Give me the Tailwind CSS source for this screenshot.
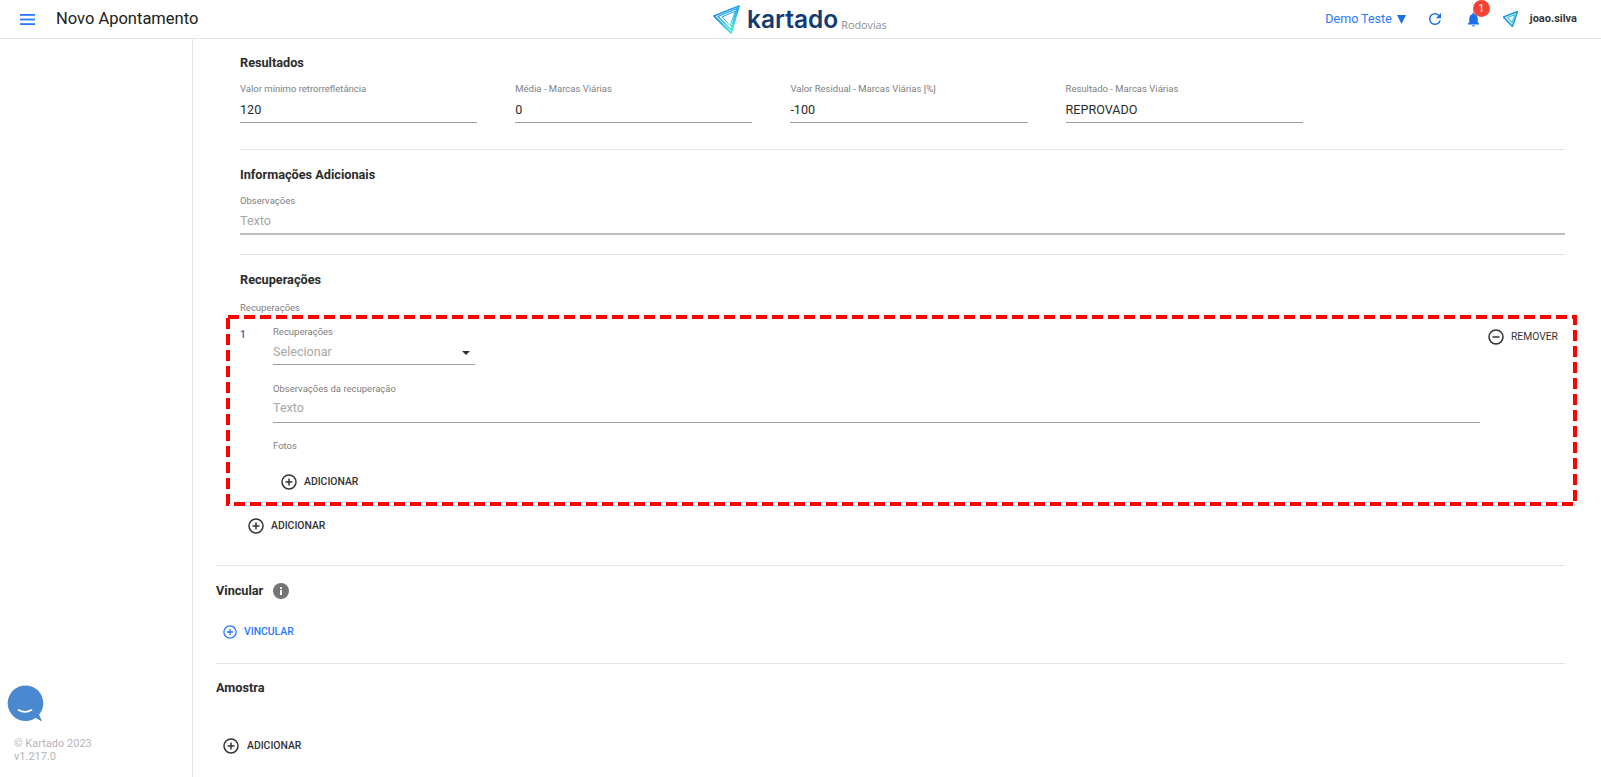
<!DOCTYPE html>
<html lang="pt-BR">
  <head>
    <meta charset="UTF-8" />
    <title>Novo Apontamento</title>
    <script src="https://cdn.jsdelivr.net/npm/@tailwindcss/browser@4"></script>
  </head>
  <body class="antialiased bg-white h-[777px] overflow-hidden font-['Roboto',sans-serif] text-[#2b2b2b]">
    <header class="relative flex items-center justify-between h-[39px] border-b border-[#e4e4e4] pl-[20px] pr-[24px]">
      <div class="flex items-center">
        <svg class="w-[15px] h-[11px]" viewBox="0 0 15 11" fill="#2979ff">
          <rect y="0" width="15" height="1.800" />
          <rect y="4.600" width="15" height="1.800" />
          <rect y="9.200" width="15" height="1.800" />
        </svg>
        <div class="ml-[21px] text-[16.5px] text-[#212121]">Novo Apontamento</div>
      </div>

      <!-- logo centrada na barra -->
      <div class="absolute left-[713px] top-[4px] flex items-end h-[30px]">
        <svg class="w-[27px] h-[29px]" viewBox="0 0 27 29" fill="none">
          <defs>
            <linearGradient id="logoGrad" x1="0" y1="0" x2="0.6" y2="1">
              <stop offset="0" stop-color="#1a7bf0" />
              <stop offset="0.6" stop-color="#25b4ea" />
              <stop offset="1" stop-color="#4fe6cf" />
            </linearGradient>
          </defs>
          <path d="M1 11 L26 1 L18 28 Z" stroke="url(#logoGrad)" stroke-width="1.800" stroke-linejoin="round" />
          <path d="M5 11.500 L24 3.500 L17.500 24.500 Z" stroke="url(#logoGrad)" stroke-width="1.200" stroke-linejoin="round" />
          <path d="M9 12 L22.500 6 L17 20.500 Z" stroke="url(#logoGrad)" stroke-width="1" stroke-linejoin="round" />
        </svg>
        <span class="ml-[7px] mb-[1px] text-[24.500px] leading-[28px] font-semibold text-[#123a73] font-['Inter',sans-serif]">kartado</span>
        <span class="ml-[3px] mb-[2px] text-[10.800px] leading-[14px] text-[#8a8f94] font-['Open_Sans',sans-serif]">Rodovias</span>
      </div>

      <div class="flex items-center">
        <span class="text-[12.500px] text-[#2979ff]">Demo Teste</span>
        <svg class="ml-[5px] w-[9px] h-[9px]" viewBox="0 0 9 9" fill="#1a6fe8"><path d="M0 0h9L4.500 9z" /></svg>
        <svg class="ml-[20px] w-[18px] h-[18px]" viewBox="0 0 24 24" fill="#1a6fe8">
          <path d="M17.650 6.350A7.960 7.960 0 0 0 12 4a8 8 0 1 0 7.730 10h-2.080A6 6 0 1 1 12 6c1.660 0 3.140.690 4.220 1.780L13 11h7V4l-2.350 2.350z" />
        </svg>
        <div class="relative ml-[21px] w-[17px] h-[17px]">
          <svg class="w-[17px] h-[17px]" viewBox="0 0 24 24" fill="#1a6fe8">
            <path d="M12 22c1.100 0 2-.900 2-2h-4a2 2 0 0 0 2 2zm6-6v-5c0-3.070-1.630-5.640-4.500-6.320V4a1.500 1.500 0 0 0-3 0v.680C7.640 5.360 6 7.920 6 11v5l-2 2v1h16v-1l-2-2z" />
          </svg>
          <span class="absolute left-[8px] -top-[11px] flex items-center justify-center w-[17px] h-[17px] rounded-full bg-[#f44336] text-white text-[10px]">1</span>
        </div>
        <svg class="ml-[21px] w-[15px] h-[16px]" viewBox="0 0 27 29" fill="none">
          <path d="M1 11 L26 1 L17 28 Z" stroke="#1f9be8" stroke-width="3" stroke-linejoin="round" />
          <path d="M8 12 L22 6 L16.500 21 Z" stroke="#47d0d0" stroke-width="2.400" stroke-linejoin="round" />
        </svg>
        <span class="ml-[12px] text-[11px] font-bold text-[#37383a]">joao.silva</span>
      </div>
    </header>

    <div class="flex h-[738px]">
      <aside class="relative w-[193px] shrink-0 border-r border-[#e4e4e4]">
        <!-- bolha do chat -->
        <svg class="absolute left-[7px] top-[646px] w-[37px] h-[38px]" viewBox="0 0 37 38">
          <circle cx="18.500" cy="18.200" r="17.800" fill="#4a88d0" />
          <path d="M27 32 L35 36.500 L31 27 Z" fill="#4a88d0" />
          <path d="M11.500 25c4 2.200 9 2.200 13 0" fill="none" stroke="#fff" stroke-width="1.800" stroke-linecap="round" />
        </svg>
        <div class="absolute left-[14px] top-[698px] text-[11px] leading-[13px] text-[#b5b5b5]">
          <div>© Kartado 2023</div>
          <div>v1.217.0</div>
        </div>
      </aside>

      <main class="flex-1 pl-[23px] pr-[36px]">
        <div class="pl-[24px]">
          <h2 class="pt-[16px] text-[12.700px] leading-[16px] font-bold">Resultados</h2>
          <div class="mt-[12px] flex gap-[38px]">
            <div class="w-[237.200px]">
              <div class="text-[9.500px] leading-[12px] text-[#808080]">Valor mínimo retrorrefletância</div>
              <div class="mt-[4px] h-[24px] text-[12.600px] leading-[22px] border-b border-[#9e9e9e]">120</div>
            </div>
            <div class="w-[237.200px]">
              <div class="text-[9.500px] leading-[12px] text-[#808080]">Média - Marcas Viárias</div>
              <div class="mt-[4px] h-[24px] text-[12.600px] leading-[22px] border-b border-[#9e9e9e]">0</div>
            </div>
            <div class="w-[237.200px]">
              <div class="text-[9.500px] leading-[12px] text-[#808080]">Valor Residual - Marcas Viárias [%]</div>
              <div class="mt-[4px] h-[24px] text-[12.600px] leading-[22px] border-b border-[#9e9e9e]">-100</div>
            </div>
            <div class="w-[237.200px]">
              <div class="text-[9.500px] leading-[12px] text-[#808080]">Resultado - Marcas Viárias</div>
              <div class="mt-[4px] h-[24px] text-[12.600px] leading-[22px] border-b border-[#9e9e9e]">REPROVADO</div>
            </div>
          </div>

          <div class="mt-[26px] border-t border-[#e4e4e4]"></div>
          <h2 class="mt-[17px] text-[12.700px] leading-[16px] font-bold">Informações Adicionais</h2>
          <div class="mt-[12px] text-[9.500px] leading-[12px] text-[#808080]">Observações</div>
          <div class="mt-[4px] h-[24px] text-[12.600px] leading-[20px] text-[#a8a8a8] border-b-2 border-[#bdbdbd]">Texto</div>

          <div class="mt-[19px] border-t border-[#e4e4e4]"></div>
          <h2 class="mt-[17px] text-[12.700px] leading-[16px] font-bold">Recuperações</h2>
          <div class="mt-[14px] text-[9.500px] leading-[12px] text-[#808080]">Recuperações</div>
        </div>

        <!-- destaque vermelho -->
        <div class="relative mt-[1px] ml-[10px] -mr-[12px] h-[191px] pl-[14px] pr-[12px] flex">
          <svg class="absolute inset-0 w-full h-full" fill="none">
            <rect x="2" y="2" width="calc(100% - 4px)" height="187" stroke="#ff0000" stroke-width="4" stroke-dasharray="11 5" />
          </svg>
          <div class="w-[33px] shrink-0 pt-[14px] text-[10px] leading-[12px] font-medium text-[#1a5fa8]">1</div>
          <div class="flex-1">
            <div class="pt-[11px] text-[9.500px] leading-[12px] text-[#808080]">Recuperações</div>
            <div class="relative mt-[4px] w-[202px] h-[23px] text-[12.600px] leading-[20px] text-[#a8a8a8] border-b border-[#9e9e9e]">
              Selecionar
              <svg class="absolute right-[5px] top-[9px] w-[8px] h-[4px]" viewBox="0 0 8 4" fill="#333"><path d="M0 0h8L4 4z" /></svg>
            </div>
            <div class="mt-[18px] text-[9.500px] leading-[12px] text-[#808080]">Observações da recuperação</div>
            <div class="mt-[3px] h-[25px] text-[12.600px] leading-[20px] text-[#a8a8a8] border-b border-[#9e9e9e]">Texto</div>
            <div class="mt-[17px] text-[9.500px] leading-[12px] text-[#808080]">Fotos</div>
            <div class="mt-[22px] ml-[8px] flex items-center">
              <svg class="w-[16px] h-[16px]" viewBox="0 0 16 16" fill="none" stroke="#333" stroke-width="1.500">
                <circle cx="8" cy="8" r="7" /><path d="M4.500 8h7M8 4.500v7" />
              </svg>
              <span class="ml-[7px] text-[10.400px] font-medium text-[#333]">ADICIONAR</span>
            </div>
          </div>
          <div class="w-[85px] shrink-0 pt-[14px] pl-[8px] flex items-start">
            <svg class="w-[16px] h-[16px]" viewBox="0 0 16 16" fill="none" stroke="#333" stroke-width="1.500">
              <circle cx="8" cy="8" r="7" /><path d="M4.500 8h7" />
            </svg>
            <span class="ml-[7px] text-[10.300px] leading-[16px] text-[#333]">REMOVER</span>
          </div>
        </div>

        <div class="mt-[12px] ml-[32px] flex items-center">
          <svg class="w-[16px] h-[16px]" viewBox="0 0 16 16" fill="none" stroke="#333" stroke-width="1.500">
            <circle cx="8" cy="8" r="7" /><path d="M4.500 8h7M8 4.500v7" />
          </svg>
          <span class="ml-[7px] text-[10.400px] font-medium text-[#333]">ADICIONAR</span>
        </div>

        <div class="mt-[31px] border-t border-[#e4e4e4]"></div>
        <div class="mt-[17px] flex items-center">
          <h2 class="text-[12.700px] leading-[16px] font-bold">Vincular</h2>
          <svg class="ml-[10px] w-[16px] h-[16px]" viewBox="0 0 16 16">
            <circle cx="8" cy="8" r="8" fill="#757575" />
            <rect x="7" y="7" width="2" height="5" fill="#fff" /><rect x="7" y="4" width="2" height="2" fill="#fff" />
          </svg>
        </div>
        <div class="mt-[25px] ml-[7px] flex items-center">
          <svg class="w-[14px] h-[14px]" viewBox="0 0 16 16" fill="none" stroke="#2979ff" stroke-width="1.500">
            <circle cx="8" cy="8" r="7" /><path d="M4.500 8h7M8 4.500v7" />
          </svg>
          <span class="ml-[7px] text-[10.400px] font-medium text-[#2979ff]">VINCULAR</span>
        </div>

        <div class="mt-[23px] border-t border-[#e4e4e4]"></div>
        <h2 class="mt-[16px] text-[12.700px] leading-[16px] font-bold">Amostra</h2>
        <div class="mt-[42px] ml-[7px] flex items-center">
          <svg class="w-[16px] h-[16px]" viewBox="0 0 16 16" fill="none" stroke="#333" stroke-width="1.500">
            <circle cx="8" cy="8" r="7" /><path d="M4.500 8h7M8 4.500v7" />
          </svg>
          <span class="ml-[8px] text-[10.400px] font-medium text-[#333]">ADICIONAR</span>
        </div>
      </main>
    </div>
  </body>
</html>
